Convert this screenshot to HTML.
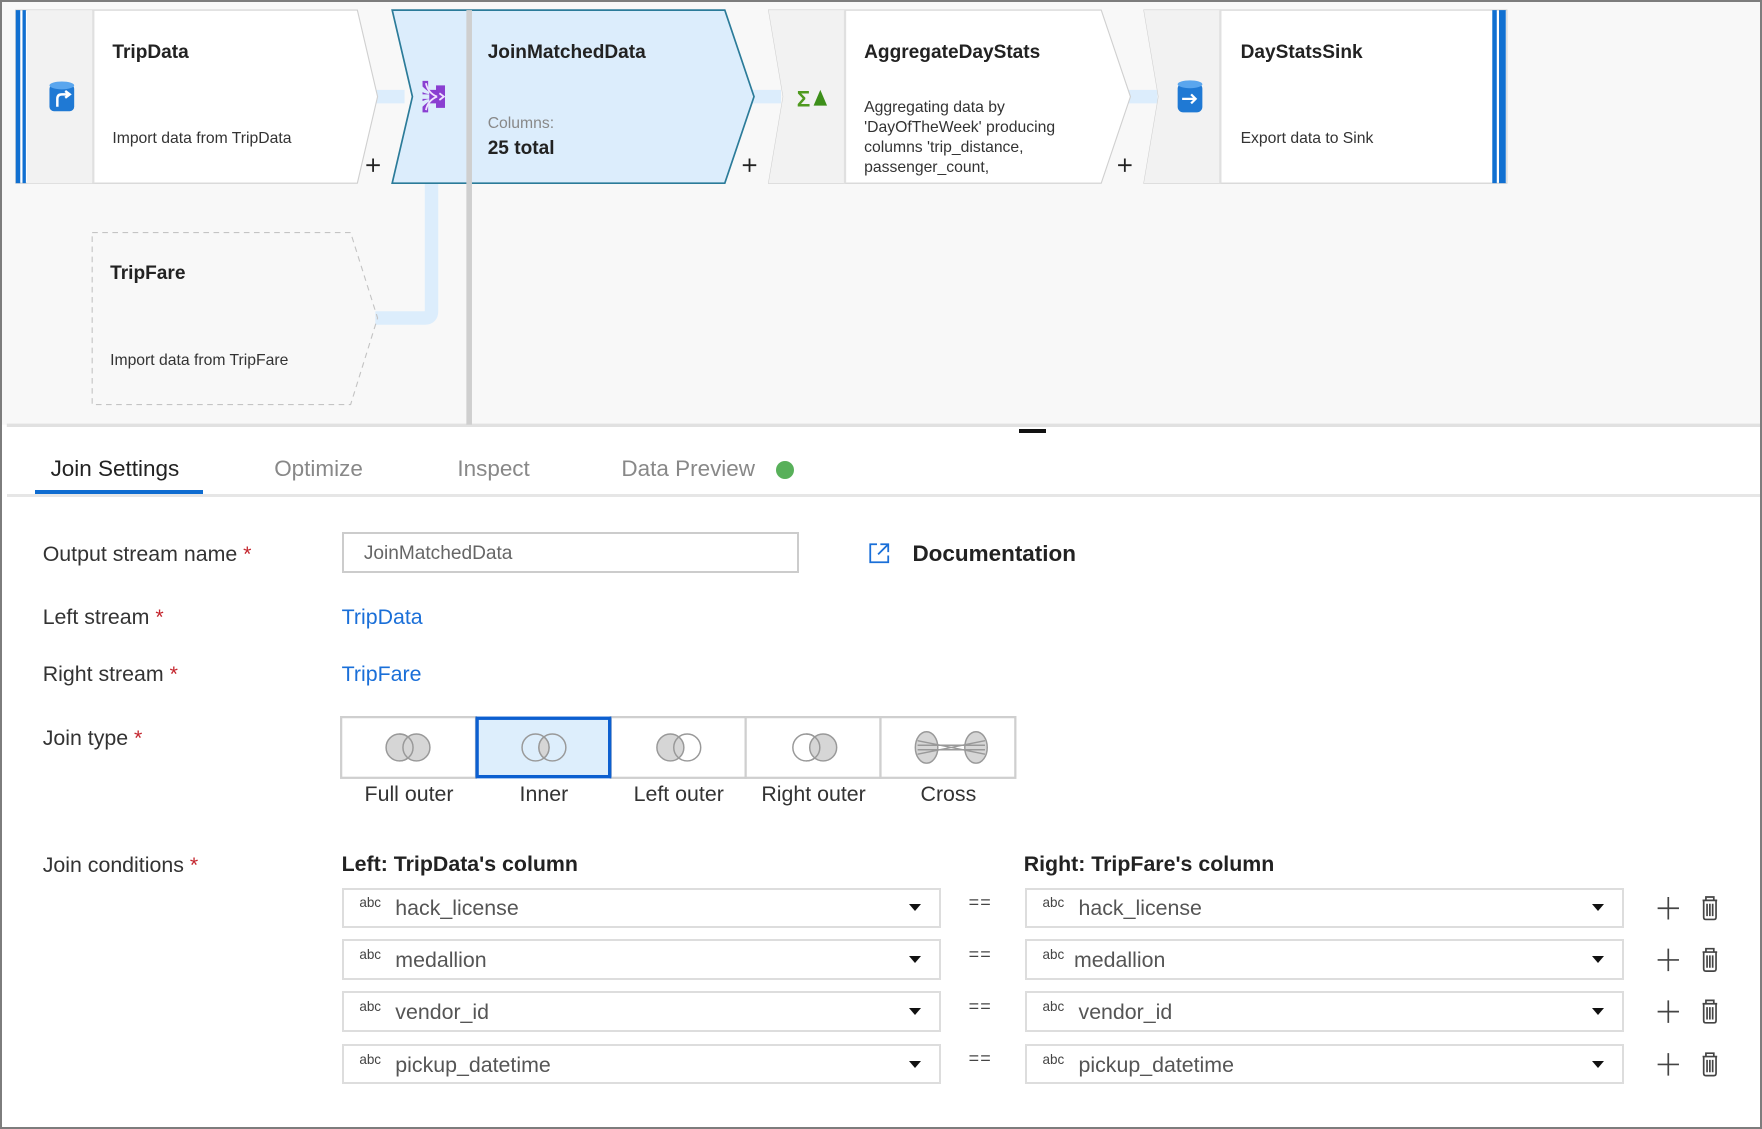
<!DOCTYPE html>
<html><head><meta charset="utf-8"><style>
*{margin:0;padding:0;box-sizing:border-box}
html,body{width:1762px;height:1129px;overflow:hidden;background:#fff}
#w{zoom:1.12372;width:1568px;height:1005px;position:relative;font-family:"Liberation Sans",sans-serif;color:#222}
.a{position:absolute;white-space:nowrap}
.lbl{font-size:19px;color:#333}
.req{color:#c4262e}
.lnk{color:#1a6fd8;font-size:19px}
.box{position:absolute;border:1px solid #ccc;background:#fff}
.sel{position:absolute;border:2px solid #ddd;background:#fff;height:36px}
.sel .t{position:absolute;left:14px;top:5px;font-size:12px;color:#444}
.sel .v{position:absolute;left:46px;top:6px;font-size:19px;color:#555}
.sel .dd{position:absolute;right:16px;top:13px;width:0;height:0;border-left:6px solid transparent;border-right:6px solid transparent;border-top:7px solid #111}
.eq{position:absolute;left:862px;font-size:16px;color:#444;letter-spacing:1px}
</style></head><body><div id="w">
<svg class="a" style="left:0;top:0" width="1568" height="380" viewBox="0 0 1568 380">
<rect x="0" y="0" width="1568" height="378" fill="#f8f8f8"/>
<rect x="6" y="377" width="1562" height="3" fill="#e1e1e1"/>
<rect x="330" y="80" width="30" height="12" fill="#dcedfc"/>
<rect x="665" y="80" width="30" height="12" fill="#dcedfc"/>
<rect x="1000" y="80" width="30" height="12" fill="#dcedfc"/>
<path d="M334 283 H378 Q384 283 384 277 V160" stroke="#dcedfc" stroke-width="12" fill="none"/>
<path d="M14 9 H318 L336 86 L318 163 H14 Z" fill="#fff" stroke="#d0d0d0"/>
<rect x="24" y="9" width="58" height="154" fill="#f2f2f2"/>
<rect x="82" y="9" width="2" height="154" fill="#e0e0e0"/>
<rect x="14" y="9" width="4" height="154" fill="#1170d1"/>
<rect x="20" y="9" width="3" height="154" fill="#1170d1"/>
<rect x="44" y="75" width="22" height="24" rx="4" fill="#1f79d4"/><ellipse cx="55" cy="76" rx="11" ry="3.5" fill="#5aa6ee"/>
<path d="M51 95 V88 Q51 84 55 84 H61 M58 81 L62 84 L58 87" stroke="#fff" stroke-width="2.2" fill="none"/>
<path d="M349 9 H645 L671 86 L645 163 H349 L367 86 Z" fill="#dcedfc" stroke="#2b7b99" stroke-width="1.5"/>
<rect x="415" y="9" width="5" height="369" fill="#cfcfcf"/>
<path d="M376 72 h5 v6 q2 4 6 5 h-3 q-4 -2 -8 -6 z M376 100 h5 v-6 q2 -4 6 -5 h-3 q-4 2 -8 6 z" fill="#8a3fd1"/>
<path d="M376 72 v10 q4 2 8 2 h-8 v4 h8 q-4 0 -8 2 v10 M382 80 h6 v-4 h8 v20 h-8 v-4 h-6 z" fill="#8a3fd1"/>
<path d="M379 74 q2 9 10 12 M379 98 q2 -9 10 -12 M391 83 l4 3 -4 3" stroke="#efe2ff" stroke-width="1.6" fill="none"/>
<path d="M684 9 H980 L1006 86 L980 163 H684 L697 86 Z" fill="#fff" stroke="#d0d0d0"/>
<path d="M684 9 H752 V163 H684 L697 86 Z" fill="#f2f2f2"/>
<rect x="751" y="9" width="2" height="154" fill="#e0e0e0"/>
<text x="709" y="95" font-size="20" font-weight="bold" fill="#4f9a1f" font-family="Liberation Sans">Σ</text>
<path d="M724 94 L730 80 L736 94 Z" fill="#3d8f1a"/>
<path d="M1018 9 H1341 V163 H1018 L1031 86 Z" fill="#fff" stroke="#d0d0d0"/>
<path d="M1018 9 H1086 V163 H1018 L1031 86 Z" fill="#f2f2f2"/>
<rect x="1085" y="9" width="2" height="154" fill="#e0e0e0"/>
<rect x="1328" y="9" width="4" height="154" fill="#1170d1"/>
<rect x="1334" y="9" width="6" height="154" fill="#1170d1"/>
<rect x="1048" y="74" width="22" height="26" rx="5" fill="#1f79d4"/><ellipse cx="1059" cy="75" rx="11" ry="3.5" fill="#5aa6ee"/>
<path d="M1052 88 H1064 M1060 84 L1064 88 L1060 92" stroke="#fff" stroke-width="2" fill="none"/>
<path d="M82 207 H312 L336 283 L312 360 H82 Z" fill="none" stroke="#c4c4c4" stroke-dasharray="5 4"/>
<g stroke="#222" stroke-width="1.6"><path d="M326 147 h12 M332 141 v12"/><path d="M661 147 h12 M667 141 v12"/><path d="M995 147 h12 M1001 141 v12"/></g>
</svg>
<div class="a" style="left:907px;top:382px;width:24px;height:3px;background:#111"></div>
<div class="a" style="left:100px;top:37px;font-size:17px;font-weight:bold">TripData</div>
<div class="a" style="left:100px;top:116px;font-size:14px;color:#333">Import data from TripData</div>
<div class="a" style="left:434px;top:37px;font-size:17px;font-weight:bold">JoinMatchedData</div>
<div class="a" style="left:434px;top:102px;font-size:14px;color:#888">Columns:</div>
<div class="a" style="left:434px;top:123px;font-size:17px;font-weight:bold;color:#222">25 total</div>
<div class="a" style="left:769px;top:37px;font-size:17px;font-weight:bold">AggregateDayStats</div>
<div class="a" style="left:769px;top:87px;font-size:14px;line-height:18px;color:#333;height:74px;overflow:hidden">Aggregating data by<br>'DayOfTheWeek' producing<br>columns 'trip_distance,<br>passenger_count,<br>trip_time_in_secs</div>
<div class="a" style="left:1104px;top:37px;font-size:17px;font-weight:bold">DayStatsSink</div>
<div class="a" style="left:1104px;top:116px;font-size:14px;color:#333">Export data to Sink</div>
<div class="a" style="left:98px;top:234px;font-size:17px;font-weight:bold">TripFare</div>
<div class="a" style="left:98px;top:313px;font-size:14px;color:#333">Import data from TripFare</div>
<div class="a" style="left:6px;top:440px;width:1562px;height:2px;background:#e6e6e6"></div>
<div class="a" style="left:31px;top:436px;width:150px;height:4px;background:#0f6cd0"></div>
<div class="a" style="left:45px;top:406px;font-size:20px;color:#222">Join Settings</div>
<div class="a" style="left:244px;top:406px;font-size:20px;color:#888">Optimize</div>
<div class="a" style="left:407px;top:406px;font-size:20px;color:#888">Inspect</div>
<div class="a" style="left:553px;top:406px;font-size:20px;color:#888">Data Preview</div>
<div class="a" style="left:691px;top:410px;width:16px;height:16px;border-radius:50%;background:#58b05a"></div>
<div class="a lbl" style="left:38px;top:482px">Output stream name <span class="req">*</span></div>
<div class="box" style="left:304px;top:473px;width:407px;height:37px;border:2px solid #ccc"><span class="a" style="left:18px;top:8px;font-size:17px;color:#666">JoinMatchedData</span></div>
<svg class="a" style="left:772px;top:482px" width="20" height="20" viewBox="0 0 20 20"><path d="M8 2 H2 V18 H18 V12 M11 2 H18 V9 M18 2 L9 11" stroke="#1a6fd8" stroke-width="1.6" fill="none"/></svg>
<div class="a" style="left:812px;top:481px;font-size:20px;font-weight:bold;color:#222">Documentation</div>
<div class="a lbl" style="left:38px;top:538px">Left stream <span class="req">*</span></div>
<div class="a lnk" style="left:304px;top:538px">TripData</div>
<div class="a lbl" style="left:38px;top:589px">Right stream <span class="req">*</span></div>
<div class="a lnk" style="left:304px;top:589px">TripFare</div>
<div class="a lbl" style="left:38px;top:646px">Join type <span class="req">*</span></div>
<svg class="a" style="left:303px;top:637px" width="604" height="58" viewBox="0 0 604 58">
<g fill="#fff" stroke="#cfcfcf" stroke-width="2"><rect x="1" y="1" width="120" height="54"/><rect x="241" y="1" width="120" height="54"/><rect x="361" y="1" width="120" height="54"/><rect x="481" y="1" width="120" height="54"/></g>
<rect x="122" y="2" width="118" height="52" fill="#ddeefc" stroke="#0c5fd0" stroke-width="3"/>
<g stroke="#999" stroke-width="1.3">
<circle cx="53" cy="28" r="12" fill="#d6d6d6"/><circle cx="68" cy="28" r="12" fill="#d6d6d6"/><path d="M53 16 a12 12 0 0 1 0 24" fill="none"/>
<circle cx="174" cy="28" r="12" fill="none"/><circle cx="189" cy="28" r="12" fill="none"/><path d="M181.5 18.6 a12 12 0 0 1 0 18.8 a12 12 0 0 1 0 -18.8z" fill="#d6d6d6"/>
<circle cx="294" cy="28" r="12" fill="#d6d6d6"/><circle cx="309" cy="28" r="12" fill="none"/>
<circle cx="415" cy="28" r="12" fill="none"/><circle cx="430" cy="28" r="12" fill="#d6d6d6"/><path d="M415 16 a12 12 0 0 1 0 24" fill="none"/>
<ellipse cx="522" cy="28" rx="10" ry="14" fill="#d6d6d6"/><ellipse cx="566" cy="28" rx="10" ry="14" fill="#d6d6d6"/>
<path d="M514 22 L574 34 M514 34 L574 22 M514 26 H574 M514 30 H574" fill="none"/></g>
</svg>
<div class="a lbl" style="left:304px;top:696px;width:120px;text-align:center">Full outer</div>
<div class="a lbl" style="left:424px;top:696px;width:120px;text-align:center">Inner</div>
<div class="a lbl" style="left:544px;top:696px;width:120px;text-align:center">Left outer</div>
<div class="a lbl" style="left:664px;top:696px;width:120px;text-align:center">Right outer</div>
<div class="a lbl" style="left:784px;top:696px;width:120px;text-align:center">Cross</div>
<div class="a lbl" style="left:38px;top:759px">Join conditions <span class="req">*</span></div>
<div class="a" style="left:304px;top:758px;font-size:19px;font-weight:bold">Left: TripData's column</div>
<div class="a" style="left:911px;top:758px;font-size:19px;font-weight:bold">Right: TripFare's column</div>
<div class="sel" style="left:304px;top:790px;width:533px"><span class="t">abc</span><span class="v">hack_license</span><i class="dd"></i></div>
<div class="sel" style="left:912px;top:790px;width:533px"><span class="t">abc</span><span class="v">hack_license</span><i class="dd"></i></div>
<div class="sel" style="left:304px;top:836px;width:533px"><span class="t">abc</span><span class="v">medallion</span><i class="dd"></i></div>
<div class="sel" style="left:912px;top:836px;width:533px"><span class="t">abc</span><span class="v" style="left:42px">medallion</span><i class="dd"></i></div>
<div class="sel" style="left:304px;top:882px;width:533px"><span class="t">abc</span><span class="v">vendor_id</span><i class="dd"></i></div>
<div class="sel" style="left:912px;top:882px;width:533px"><span class="t">abc</span><span class="v">vendor_id</span><i class="dd"></i></div>
<div class="sel" style="left:304px;top:929px;width:533px"><span class="t">abc</span><span class="v">pickup_datetime</span><i class="dd"></i></div>
<div class="sel" style="left:912px;top:929px;width:533px"><span class="t">abc</span><span class="v">pickup_datetime</span><i class="dd"></i></div>
<div class="eq" style="top:794px">==</div><div class="eq" style="top:840px">==</div><div class="eq" style="top:886px">==</div><div class="eq" style="top:933px">==</div>
<svg class="a" style="left:1470px;top:790px" width="70" height="180" viewBox="0 0 70 180">
<g stroke="#444" stroke-width="1.5" fill="none">
<g id="r"><path d="M5 18 H24 M14.5 8 V28"/><path d="M45 11 H58 M48 11 V8 H55 V11 M46 11 V26 Q46 28 48 28 H55 Q57 28 57 26 V11 M49 14 V25 M51.5 14 V25 M54 14 V25"/></g>
<use href="#r" y="46"/><use href="#r" y="92"/><use href="#r" y="139"/>
</g></svg>
<div class="a" style="left:0;top:0;width:1568px;height:1005px;border:2px solid #7d7d7d"></div>
</div></body></html>
